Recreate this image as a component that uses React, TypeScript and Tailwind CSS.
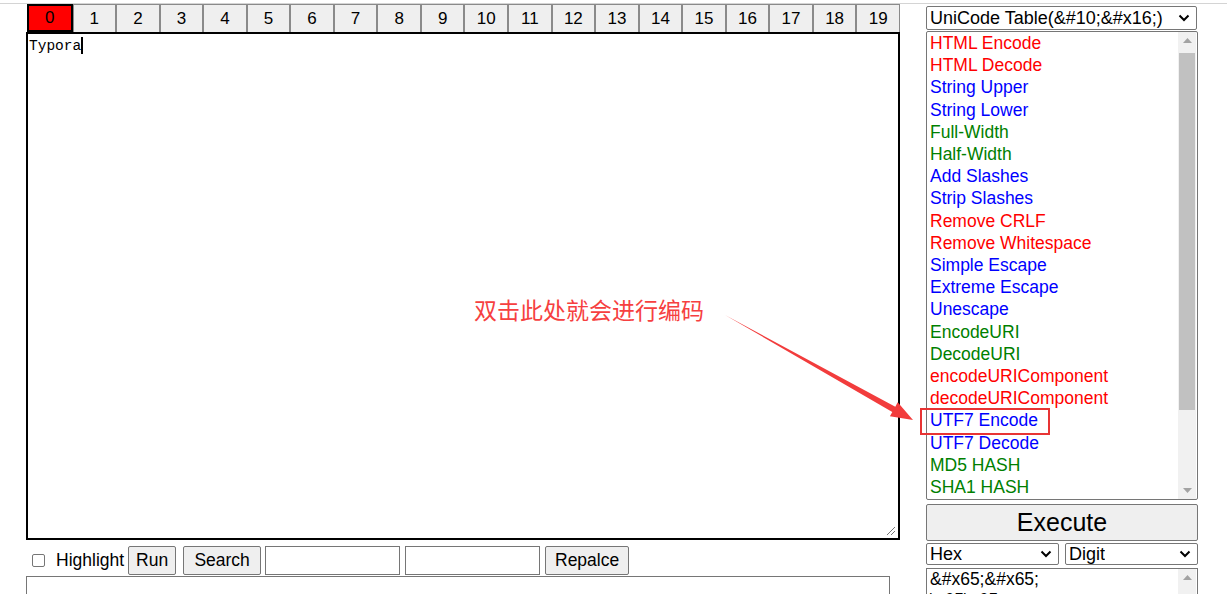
import React from "react";

const tabs = Array.from({ length: 20 }, (_, i) => i);

const items: [string, string][] = [
  ["HTML Encode", "text-[#ff0000]"],
  ["HTML Decode", "text-[#ff0000]"],
  ["String Upper", "text-[#0000ff]"],
  ["String Lower", "text-[#0000ff]"],
  ["Full-Width", "text-[#008000]"],
  ["Half-Width", "text-[#008000]"],
  ["Add Slashes", "text-[#0000ff]"],
  ["Strip Slashes", "text-[#0000ff]"],
  ["Remove CRLF", "text-[#ff0000]"],
  ["Remove Whitespace", "text-[#ff0000]"],
  ["Simple Escape", "text-[#0000ff]"],
  ["Extreme Escape", "text-[#0000ff]"],
  ["Unescape", "text-[#0000ff]"],
  ["EncodeURI", "text-[#008000]"],
  ["DecodeURI", "text-[#008000]"],
  ["encodeURIComponent", "text-[#ff0000]"],
  ["decodeURIComponent", "text-[#ff0000]"],
  ["UTF7 Encode", "text-[#0000ff]"],
  ["UTF7 Decode", "text-[#0000ff]"],
  ["MD5 HASH", "text-[#008000]"],
  ["SHA1 HASH", "text-[#008000]"],
];

function Chevron() {
  return (
    <svg width="12" height="8" viewBox="0 0 12 8" className="shrink-0">
      <path d="M1.5 1.5 L6 6 L10.5 1.5" fill="none" stroke="#000" strokeWidth="2" />
    </svg>
  );
}

function Select({ label, className }: { label: string; className: string }) {
  return (
    <div
      className={`flex items-center justify-between border border-[#767676] rounded-[2px] bg-white pl-[3px] pr-[6px] ${className}`}
    >
      <span className="truncate">{label}</span>
      <Chevron />
    </div>
  );
}

function Arrow({ up }: { up?: boolean }) {
  return (
    <div className="h-[17px] flex items-center justify-center">
      <svg width="9" height="5" viewBox="0 0 9 5">
        <path d={up ? "M0 5 L4.5 0 L9 5 Z" : "M0 0 L4.5 5 L9 0 Z"} fill="#a3a3a3" />
      </svg>
    </div>
  );
}

export default function App() {
  return (
    <div
      className="relative w-[1227px] h-[594px] overflow-hidden bg-white text-black"
      style={{ fontFamily: '"Liberation Sans", Arial, sans-serif' }}
    >
      <div className="mt-[3px] border-t border-[#d4d4d4]" />
      <div className="flex">
        {/* left column */}
        <div className="ml-[26px] w-[874px] flex flex-col">
          <div className="flex h-[28px] pl-[1px]">
            {tabs.map((t) =>
              t === 0 ? (
                <div
                  key={t}
                  className="flex-1 flex items-center justify-center bg-[#ff0000] border-2 border-black text-[17px]"
                >
                  {t}
                </div>
              ) : (
                <div
                  key={t}
                  className="flex-1 flex items-center justify-center bg-[#efefef] border-x border-t border-[#8a8a8a] text-[17px]"
                >
                  {t}
                </div>
              )
            )}
          </div>
          <div className="relative h-[508px] border-2 border-black bg-white px-[1px] pt-[3px]">
            <div className="flex items-start">
              <span
                className="text-[14.5px] leading-[18px]"
                style={{ fontFamily: '"Liberation Mono", "Courier New", monospace' }}
              >
                Typora
              </span>
              <span className="w-[2px] h-[17px] bg-black" />
            </div>
            <svg
              width="11"
              height="11"
              viewBox="0 0 11 11"
              className="absolute right-[2px] bottom-[2px]"
            >
              <path d="M10 2 L2 10 M10 6 L6 10" stroke="#777" strokeWidth="1" />
            </svg>
          </div>
          <div className="flex items-center h-[30px] mt-[5px] text-[17.5px]">
            <div className="w-[13px] h-[13px] ml-[6px] border border-[#767676] rounded-[2px] bg-white" />
            <span className="ml-[11px]">Highlight</span>
            <div className="ml-[4px] h-[29px] w-[48px] flex items-center justify-center border border-[#767676] rounded-[2px] bg-[#efefef]">
              Run
            </div>
            <div className="ml-[7px] h-[29px] w-[78px] flex items-center justify-center border border-[#767676] rounded-[2px] bg-[#efefef]">
              Search
            </div>
            <div className="ml-[4px] h-[29px] w-[135px] border border-[#767676] bg-white" />
            <div className="ml-[5px] h-[29px] w-[135px] border border-[#767676] bg-white" />
            <div className="ml-[5px] h-[29px] w-[84px] flex items-center justify-center border border-[#767676] rounded-[2px] bg-[#efefef]">
              Repalce
            </div>
          </div>
          <div className="mt-[1px] w-[864px] h-[40px] border border-[#767676] bg-white" />
        </div>

        {/* right column */}
        <div className="ml-[26px] w-[272px] flex flex-col pt-[2px]">
          <Select label={"UniCode Table(&#10;&#x16;)"} className="h-[24px] w-[271px] text-[18px]" />
          <div className="mt-[1px] h-[469px] flex border border-[#767676] rounded-[2px] bg-white">
            <div className="flex-1 pl-[3px] text-[17.5px] leading-[22.2px]">
              {items.map(([name, cls]) => (
                <div key={name} className={cls}>
                  {name}
                </div>
              ))}
            </div>
            <div className="w-[18px] mr-[1px] bg-[#f1f1f1] flex flex-col">
              <Arrow up />
              <div className="mx-[1px] h-[357px] mt-[4px] bg-[#c1c1c1]" />
              <div className="flex-1" />
              <Arrow />
            </div>
          </div>
          <div className="mt-[4px] h-[37px] flex items-center justify-center border border-[#767676] rounded-[2px] bg-[#efefef] text-[25px]">
            Execute
          </div>
          <div className="mt-[2px] flex justify-between">
            <Select label="Hex" className="h-[22px] w-[133px] text-[18px]" />
            <Select label="Digit" className="h-[22px] w-[133px] text-[18px]" />
          </div>
          <div className="mt-[3px] h-[40px] flex border border-[#767676] bg-white">
            <div className="flex-1 pl-[3px] text-[17.5px] leading-[21px]">
              <div>{"&#x65;&#x65;"}</div>
              <div>{"\\u65\\u65"}</div>
            </div>
            <div className="w-[18px] mr-[1px] bg-[#f1f1f1]">
              <Arrow up />
            </div>
          </div>
        </div>
      </div>

      {/* annotation overlay */}
      <div
        className="absolute left-[474px] top-[294px] text-[23px] leading-[30px] text-[#f64040]"
        style={{ fontFamily: '"Noto Sans CJK SC", sans-serif' }}
      >
        双击此处就会进行编码
      </div>
      <svg className="absolute left-0 top-0 pointer-events-none" width="1227" height="594">
        <polygon
          points="725,315 895.3,406.7 897.7,402.3 913,420 889.9,416.3 892.3,411.9"
          fill="#f23c3c"
        />
      </svg>
      <div className="absolute left-[920px] top-[408px] w-[130px] h-[27px] border-2 border-[#e83434]" />
    </div>
  );
}
